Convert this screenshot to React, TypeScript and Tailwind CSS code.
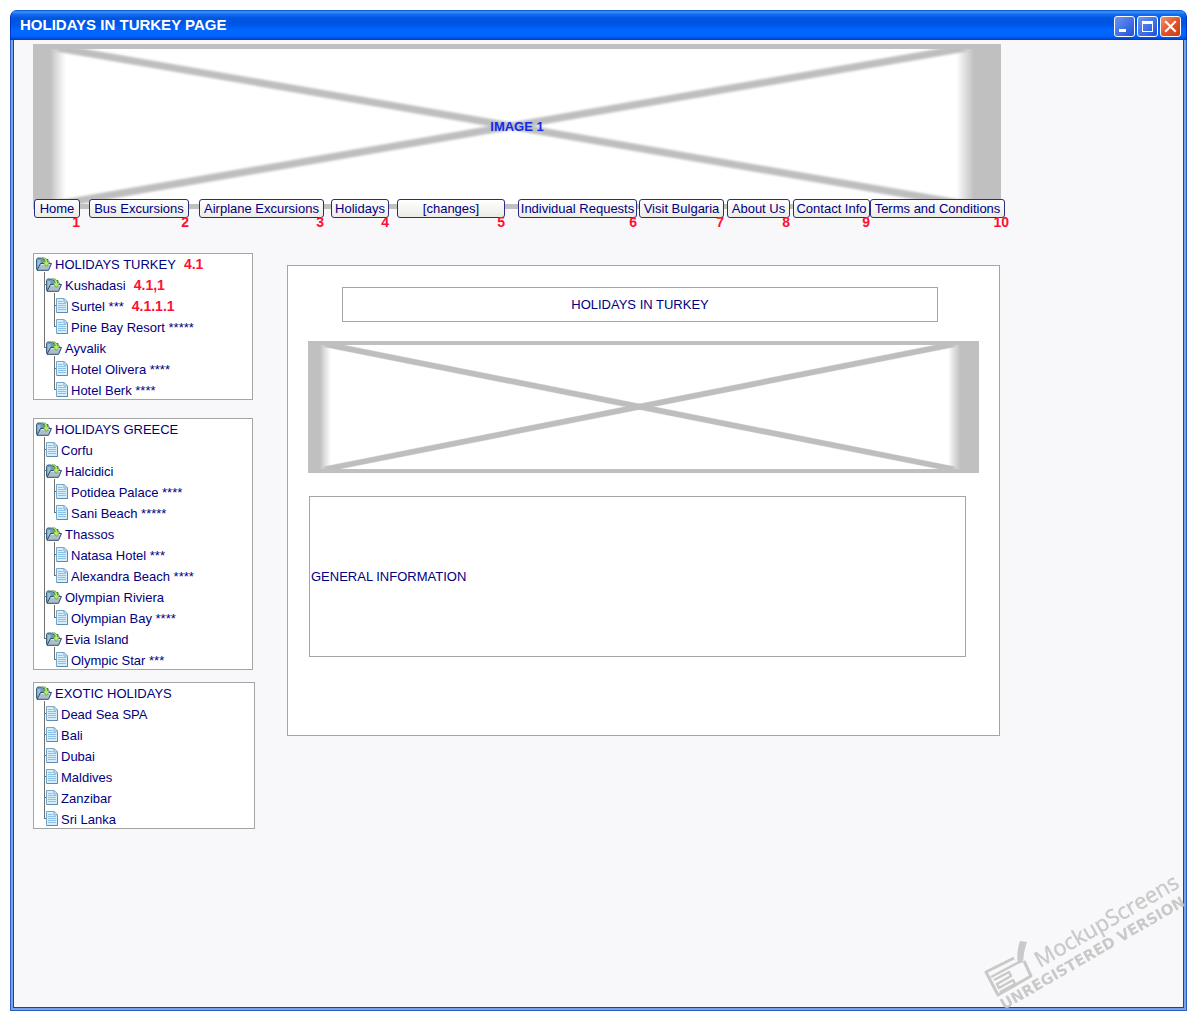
import React from "react";

type Node = { label: string; note?: string; children?: Node[] };

const trees: { width: string; root: Node }[] = [
  {
    width: "w-[220px]",
    root: {
      label: "HOLIDAYS TURKEY",
      note: "4.1",
      children: [
        {
          label: "Kushadasi",
          note: "4.1,1",
          children: [{ label: "Surtel ***", note: "4.1.1.1" }, { label: "Pine Bay Resort *****" }],
        },
        { label: "Ayvalik", children: [{ label: "Hotel Olivera ****" }, { label: "Hotel Berk ****" }] },
      ],
    },
  },
  {
    width: "w-[220px] mt-[18px]",
    root: {
      label: "HOLIDAYS GREECE",
      children: [
        { label: "Corfu" },
        { label: "Halcidici", children: [{ label: "Potidea Palace ****" }, { label: "Sani Beach *****" }] },
        { label: "Thassos", children: [{ label: "Natasa Hotel ***" }, { label: "Alexandra Beach ****" }] },
        { label: "Olympian Riviera", children: [{ label: "Olympian Bay ****" }] },
        { label: "Evia Island", children: [{ label: "Olympic Star ***" }] },
      ],
    },
  },
  {
    width: "w-[222px] mt-3",
    root: {
      label: "EXOTIC HOLIDAYS",
      children: [
        { label: "Dead Sea SPA" },
        { label: "Bali" },
        { label: "Dubai" },
        { label: "Maldives" },
        { label: "Zanzibar" },
        { label: "Sri Lanka" },
      ],
    },
  },
];

const navItems = [
  { label: "Home", box: "w-[46px]" },
  { label: "Bus Excursions", box: "w-[100px] ml-[9px]" },
  { label: "Airplane Excursions", box: "w-[125px] ml-[10px]" },
  { label: "Holidays", box: "w-[58px] ml-[7px]" },
  { label: "[changes]", box: "w-[108px] ml-2" },
  { label: "Individual Requests", box: "w-[119px] ml-[13px]" },
  { label: "Visit Bulgaria", box: "w-[85px] ml-0.5" },
  { label: "About Us", box: "w-[63px] ml-[3px]" },
  { label: "Contact Info", box: "w-[77px] ml-[3px]" },
  { label: "Terms and Conditions", box: "w-[135px]" },
];

function FolderIcon() {
  return (
    <svg width="16" height="14" viewBox="0 0 16 14" className="shrink-0" aria-hidden="true">
      <path d="M.5 12.500V2.500L1.500 1h4L7 2.500h5V6" fill="#6f9bb8" stroke="#3b6286" />
      <path d="M1.500 3h3v7h-3z" fill="#9cc0d4" />
      <path d="M1 13.300 4.500 6.500h11L12.500 13.300z" fill="#a9bfcb" stroke="#2f4c6e" />
      <path d="M5 7.500h9" stroke="#dbe7ee" />
      <path d="M6 .8c3.500-.4 5.500 1.200 5.600 4.200H14L10.300 9.500 6.800 5h2.400C9.200 3 8.200 1.600 6 .8z" fill="#b9ee5c" stroke="#5b9440" strokeWidth=".7" />
    </svg>
  );
}

function PageIcon() {
  return (
    <svg width="12" height="15" viewBox="0 0 12 15" className="shrink-0" aria-hidden="true">
      <path d="M.5.500h7.500l3.500 3.500v10.500H.5z" fill="#d6edfb" stroke="#78a6c8" />
      <path d="M8 .5V4h3.500z" fill="#fff" stroke="#78a6c8" />
      <path d="M2 3.500h4.500M2 5.500h8M2 7.500h8M2 9.500h8M2 11.500h8" stroke="#8cc2e8" />
      <path d="M1 14.500h10.500V5" fill="none" stroke="#5d8bb0" />
    </svg>
  );
}

function TreeRow({ node, folder }: { node: Node; folder: boolean }) {
  return (
    <div className="flex h-[21px] items-center whitespace-nowrap">
      {folder ? <FolderIcon /> : <PageIcon />}
      <a href="#" className="mt-0.5 ml-[3px]">
        {node.label}
      </a>
      {node.note && <span className="ml-2 text-[14px] leading-4 font-bold text-[#ff0f33]">{node.note}</span>}
    </div>
  );
}

function Branch({ nodes }: { nodes: Node[] }) {
  return (
    <ul className="ml-[10px]">
      {nodes.map((n) => (
        <li
          key={n.label}
          className="relative before:absolute before:-top-[2px] before:bottom-0 before:-left-[2px] before:w-px before:bg-[#707070] last:before:bottom-auto last:before:h-[13px] after:absolute after:top-[10px] after:-left-[2px] after:h-px after:w-[2px] after:bg-[#707070]"
        >
          <TreeRow node={n} folder={!!n.children} />
          {n.children && <Branch nodes={n.children} />}
        </li>
      ))}
    </ul>
  );
}

function Placeholder({ id, className }: { id: string; className: string }) {
  return (
    <svg viewBox="0 0 1000 100" preserveAspectRatio="none" className={`block w-full ${className}`} aria-hidden="true">
      <defs>
        <linearGradient id={id}>
          <stop offset="0" stopColor="#c0c0c0" />
          <stop offset=".018" stopColor="#c0c0c0" />
          <stop offset=".025" stopColor="#dedede" />
          <stop offset=".034" stopColor="#fff" />
          <stop offset=".954" stopColor="#fff" />
          <stop offset=".963" stopColor="#dedede" />
          <stop offset=".972" stopColor="#c0c0c0" />
          <stop offset="1" stopColor="#c0c0c0" />
        </linearGradient>
        <filter id={`${id}-soft`} x="-5%" y="-5%" width="110%" height="110%">
          <feGaussianBlur stdDeviation="2 0.5" />
        </filter>
      </defs>
      <rect width="1000" height="100" fill={`url(#${id})`} />
      <g fill="#bebebe" filter={`url(#${id}-soft)`}>
        <path d="M24 0 964 95v4.500L24 4.500z" />
        <path d="M24 95 964 0v4.500L24 99.500z" />
      </g>
      <path d="M0 0h1000v3H0zM0 97h1000v3H0z" fill="#c0c0c0" />
    </svg>
  );
}

function Watermark() {
  return (
    <svg width="217" height="150" viewBox="0 0 217 150" className="pointer-events-none absolute right-0 bottom-0 overflow-visible opacity-90" aria-label="MockupScreens unregistered version">
      <g fill="none" stroke="#c4c4c4" strokeWidth="3" strokeLinejoin="round">
        <path d="M44 97 16 111l12 23 33-19-7-15" />
        <path d="M49 101 21 116M24 119l15-8 2 4-14 8 2 4 14-8 2 4-15 8" strokeWidth="2.400" />
      </g>
      <path d="M50 80l7 1q-3 8-4 20l-5 2q-2-13 2-23z" fill="#c4c4c4" />
      <g fill="#c4c4c4" stroke="#c4c4c4">
        <text strokeWidth=".4" transform="translate(70 107) rotate(-30)" className="font-['Open_Sans',sans-serif] text-[22px]">
          MockupScreens
        </text>
        <text stroke="none" transform="translate(34 149) rotate(-30)" className="font-['DejaVu_Sans',sans-serif] text-[15px] font-bold">
          UNREGISTERED VERSION
        </text>
      </g>
    </svg>
  );
}

const controlBase = "flex size-[21px] items-center justify-center rounded-[3px] border border-white";

export default function App() {
  return (
    <div className="flex min-h-screen flex-col bg-white p-[10px] font-['Liberation_Sans',Arial,sans-serif] text-[13px] leading-4 text-[#000080]">
      <div className="relative flex flex-1 flex-col">
        <header className="flex h-[30px] items-center justify-between rounded-t-[7px] border-x border-[#0035c8] bg-[linear-gradient(to_bottom,#0a50c8_0,#3a93ff_2px,#1470f0_4px,#0056e0_8px,#0055e5_14px,#0066ff_20px,#0066ff_26px,#0046d8_29px,#0038c0_30px)] pr-[5px] pl-[9px]">
          <h1 className="text-[15px] font-bold text-white">HOLIDAYS IN TURKEY PAGE</h1>
          <div className="flex gap-0.5 pt-[3px]">
            <button aria-label="Minimize" className={`${controlBase} bg-linear-to-br from-[#6c94f5] to-[#1c50d8]`}>
              <svg width="19" height="19" viewBox="0 0 19 19">
                <path d="M4 12h7v3H4z" fill="#fff" />
              </svg>
            </button>
            <button aria-label="Maximize" className={`${controlBase} bg-linear-to-br from-[#6c94f5] to-[#1c50d8]`}>
              <svg width="19" height="19" viewBox="0 0 19 19">
                <path d="M4 4h11v11H4zM5 7v7h9V7z" fill="#fff" fillRule="evenodd" />
              </svg>
            </button>
            <button aria-label="Close" className={`${controlBase} bg-linear-to-br from-[#f0926f] via-[#e2532c] to-[#c93c12]`}>
              <svg width="19" height="19" viewBox="0 0 19 19">
                <path d="M5 5l9 9M14 5l-9 9" stroke="#fff" strokeWidth="2.200" strokeLinecap="square" />
              </svg>
            </button>
          </div>
        </header>

        <div className="flex min-w-0 flex-1 border-x border-b border-[#2a5fc4]">
          <div className="flex min-w-0 flex-1 border-x-2 border-b-2 border-[#7ba2e7]">
            <div className="min-w-0 flex-1 border-x border-b border-[#1f419b] bg-[#f8f8fa] pt-1 pr-[182px] pl-[19px]">
              <div className="relative">
                <Placeholder id="banner" className="h-[165px]" />
                <span className="absolute inset-x-0 top-[75px] text-center text-[13px] font-bold text-[#1428f0]">IMAGE 1</span>
              </div>

              <nav className="relative -mt-[10px] ml-px">
                <ul className="flex">
                  {navItems.map((item, i) => (
                    <li key={item.label} className={`relative shrink-0 ${item.box}`}>
                      <button className="block h-[19px] w-full rounded-[3px] border border-[#2b2b80] bg-linear-to-b from-white to-[#ecebe4] text-center leading-[17px] whitespace-nowrap">
                        {item.label}
                      </button>
                      <span className={`absolute top-[15px] text-[14px] leading-4 font-bold text-[#ff0f33] ${i === 9 ? "-right-1" : "right-0"}`}>
                        {i + 1}
                      </span>
                    </li>
                  ))}
                </ul>
              </nav>

              <div className="mt-[35px] flex items-start">
                <aside className="w-[254px] shrink-0">
                  {trees.map((t) => (
                    <section key={t.root.label} className={`border border-[#a5a5a5] bg-white pl-0.5 ${t.width}`}>
                      <div className="-my-px">
                        <TreeRow node={t.root} folder />
                        <Branch nodes={t.root.children!} />
                      </div>
                    </section>
                  ))}
                </aside>

                <main className="mt-3 mr-px min-w-0 flex-1 border border-[#a5a5a5] bg-white pt-[21px] pr-5 pb-[78px] pl-5">
                  <h2 className="mr-[41px] ml-[34px] flex h-[35px] items-center justify-center border border-[#a5a5a5]">HOLIDAYS IN TURKEY</h2>
                  <div className="mt-[19px]">
                    <Placeholder id="photo" className="h-[132px]" />
                  </div>
                  <div className="mt-[23px] mr-[13px] ml-px flex h-[161px] items-center border border-[#a5a5a5] pl-px">GENERAL INFORMATION</div>
                </main>
              </div>
            </div>
          </div>
        </div>
        <Watermark />
      </div>
    </div>
  );
}
